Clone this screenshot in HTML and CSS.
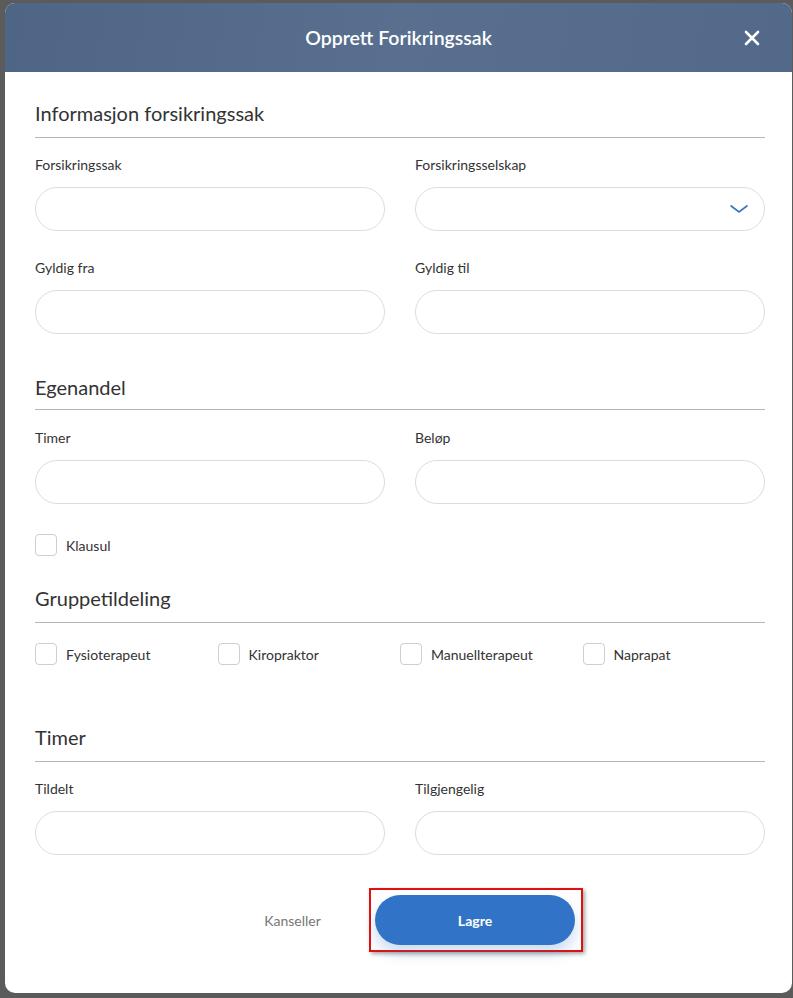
FILE: index.html
```html
<!DOCTYPE html>
<html lang="nb">
<head>
    <meta charset="UTF-8">
    <meta name="viewport" content="width=device-width, initial-scale=1.0">
    <title>Opprett Forikringssak</title>
    <link rel="stylesheet" href="styles.css">
</head>
<body>
    <div class="modal">
        <div class="modal-header">
            <h2>Opprett Forikringssak</h2>
            <button class="close-btn" aria-label="Lukk">
                <svg width="16" height="16" viewBox="0 0 16 16"><path d="M2 2 L14 14 M14 2 L2 14" stroke="#fff" stroke-width="2.6" stroke-linecap="round"/></svg>
            </button>
        </div>

        <div class="modal-body">
            <h3 class="section-title first">Informasjon forsikringssak</h3>
            <div class="field-grid first">
                <div class="field">
                    <label>Forsikringssak</label>
                    <input type="text" class="input">
                </div>
                <div class="field">
                    <label>Forsikringsselskap</label>
                    <div class="select">
                        <svg class="chevron" width="20" height="10" viewBox="0 0 20 10"><path d="M1.5 1.5 L10 8 L18.5 1.5" fill="none" stroke="#3375c6" stroke-width="1.6"/></svg>
                    </div>
                </div>
                <div class="field">
                    <label>Gyldig fra</label>
                    <input type="text" class="input">
                </div>
                <div class="field">
                    <label>Gyldig til</label>
                    <input type="text" class="input">
                </div>
            </div>

            <h3 class="section-title">Egenandel</h3>
            <div class="field-grid">
                <div class="field">
                    <label>Timer</label>
                    <input type="text" class="input">
                </div>
                <div class="field">
                    <label>Beløp</label>
                    <input type="text" class="input">
                </div>
            </div>
            <div class="check-row klausul">
                <span class="checkbox"></span>
                <span>Klausul</span>
            </div>

            <h3 class="section-title">Gruppetildeling</h3>
            <div class="check-grid">
                <div class="check-row"><span class="checkbox"></span><span>Fysioterapeut</span></div>
                <div class="check-row"><span class="checkbox"></span><span>Kiropraktor</span></div>
                <div class="check-row"><span class="checkbox"></span><span>Manuellterapeut</span></div>
                <div class="check-row"><span class="checkbox"></span><span>Naprapat</span></div>
            </div>

            <h3 class="section-title timer">Timer</h3>
            <div class="field-grid first">
                <div class="field">
                    <label>Tildelt</label>
                    <input type="text" class="input">
                </div>
                <div class="field">
                    <label>Tilgjengelig</label>
                    <input type="text" class="input">
                </div>
            </div>

            <div class="actions">
                <button class="btn-cancel">Kanseller</button>
                <div class="highlight">
                    <button class="btn-save">Lagre</button>
                </div>
            </div>
        </div>
    </div>
</body>
</html>
```

FILE: styles.css
```css
body {
    margin: 0;
    padding: 3px 1px 5px 5px;
    background: #5b5b5b;
    font-family: Lato, "Open Sans", Arial, sans-serif;
    color: #333;
}
.modal {
    background: #fff;
    border-radius: 10px;
    overflow: hidden;
    height: 990px;
    box-sizing: border-box;
}
.modal-header {
    height: 69px;
    background: linear-gradient(100deg, #4f6585 0%, #586f8f 50%, #53698a 100%);
    display: flex;
    align-items: center;
    justify-content: center;
    position: relative;
}
.modal-header h2 {
    margin: 0;
    color: #fff;
    font-size: 19.5px;
    font-weight: 600;
}
.close-btn {
    position: absolute;
    right: 32px;
    top: 27px;
    background: none;
    border: none;
    padding: 0;
    width: 16px;
    height: 16px;
    cursor: pointer;
}
.close-btn svg {
    display: block;
}
.modal-body {
    padding: 29px 27px 0 30px;
}
.section-title {
    margin: 41px 0 0 0;
    font-size: 20px;
    line-height: 24px;
    font-weight: 400;
    padding-bottom: 10px;
    border-bottom: 1px solid #b5b5b5;
    color: #333;
}
.section-title.first {
    margin-top: 0;
    padding-bottom: 12px;
}
.section-title.timer {
    margin-top: 60px;
    padding-bottom: 12px;
}
.field-grid {
    display: grid;
    grid-template-columns: 350px 350px;
    column-gap: 30px;
    row-gap: 28px;
    margin-top: 19px;
}
.field-grid.first {
    margin-top: 18px;
}
.field label {
    display: block;
    font-size: 14px;
    line-height: 18px;
    margin-bottom: 13px;
    color: #333;
}
.input,
.select {
    display: block;
    box-sizing: border-box;
    width: 100%;
    height: 44px;
    border: 1px solid #dcdcdc;
    border-radius: 22px;
    background: #fff;
    outline: none;
    font-family: inherit;
    padding: 0 18px;
}
.select {
    position: relative;
}
.chevron {
    position: absolute;
    right: 15px;
    top: 16px;
}
.check-row {
    display: flex;
    align-items: center;
    gap: 9px;
    font-size: 14px;
}
.klausul {
    margin-top: 30px;
}
.klausul + .section-title {
    margin-top: 30px;
    padding-bottom: 12px;
}
.checkbox {
    width: 22px;
    height: 22px;
    box-sizing: border-box;
    border: 1px solid #cfcfcf;
    border-radius: 4px;
    background: #fff;
}
.check-grid {
    display: grid;
    grid-template-columns: repeat(4, 1fr);
    margin-top: 20px;
}
.actions {
    display: flex;
    justify-content: center;
    align-items: center;
    margin-top: 33px;
    padding-left: 8px;
}
.btn-cancel {
    width: 135px;
    margin-right: 9px;
    background: none;
    border: none;
    font-family: inherit;
    font-size: 14px;
    color: #777;
    cursor: pointer;
}
.highlight {
    border: 2px solid #e01010;
    padding: 5px 6px 5px 4px;
    box-shadow: 2px 2px 4px rgba(0, 0, 0, 0.35);
}
.btn-save {
    display: block;
    width: 200px;
    height: 50px;
    border: none;
    border-radius: 25px;
    background: #3174c7;
    color: #fff;
    font-family: inherit;
    font-size: 14px;
    font-weight: 700;
    box-shadow: 0 8px 14px rgba(49, 116, 199, 0.25);
    cursor: pointer;
}
```
